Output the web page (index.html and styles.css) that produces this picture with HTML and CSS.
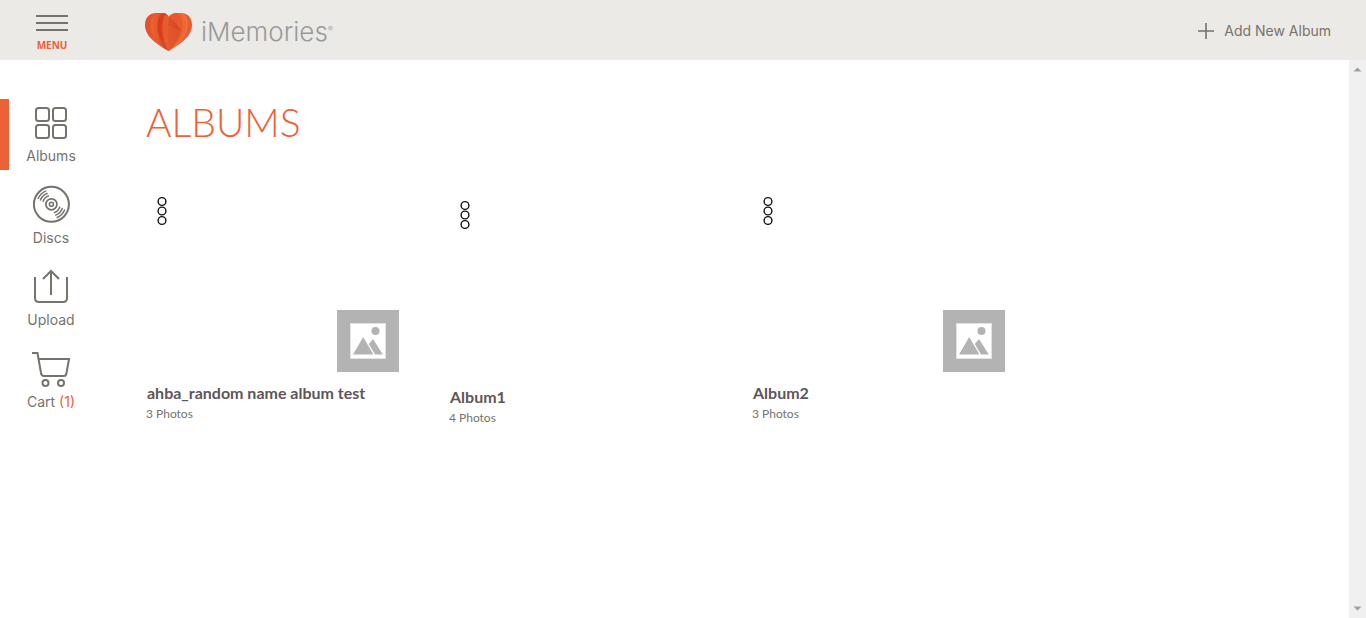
FILE: index.html
```html
<!DOCTYPE html>
<html lang="en">
<head>
<meta charset="utf-8">
<title>iMemories - Albums</title>
<meta name="viewport" content="width=device-width, initial-scale=1">
<link rel="stylesheet" href="styles.css">
</head>
<body>
<svg class="defs" width="0" height="0" aria-hidden="true">
  <symbol id="dots" viewBox="0 0 10 30"><g fill="none" stroke="#111" stroke-width="1.400"><circle cx="5" cy="5.500" r="3.900"/><circle cx="5" cy="15" r="3.900"/><circle cx="5" cy="24.500" r="3.900"/></g></symbol>
  <symbol id="photo" viewBox="0 0 62 62"><path fill="#b3b3b3" d="M0 0h62v62H0z"/><path fill="#fff" stroke="#e2e2e2" d="M13.500 13.500h35v35h-35z"/><circle cx="38.500" cy="21" r="4" fill="#b3b3b3"/><path fill="#b3b3b3" d="M16 44.500 26.200 27l10.300 17.500zM31.800 34l4.200-5 9.800 15.500h-7.800z"/></symbol>
</svg>
<header class="topbar">
  <button class="menu" type="button">
    <svg width="32" height="18" viewBox="0 0 32 18" aria-hidden="true"><path d="M0 2h32M0 9h32M0 16h32" stroke="#75736c" stroke-width="2"/></svg>
    <span>MENU</span>
  </button>
  <a class="brand" href="#">
    <svg width="48" height="40" viewBox="0 0 48 40" aria-hidden="true">
      <defs>
        <linearGradient id="outer"><stop offset="0" stop-color="#e04f28"/><stop offset=".5" stop-color="#f0693a"/><stop offset="1" stop-color="#e65a30"/></linearGradient>
        <linearGradient id="fold"><stop offset="0" stop-color="#ee6534"/><stop offset="1" stop-color="#d63f20"/></linearGradient>
        <linearGradient id="inner"><stop offset="0" stop-color="#d23a1e"/><stop offset="1" stop-color="#e04a25"/></linearGradient>
        <linearGradient id="shade"><stop offset="0" stop-color="#dd5029"/><stop offset="1" stop-color="#d04822"/></linearGradient>
      </defs>
      <path fill="url(#outer)" d="M23.500 39C13 33 0 25 0 13 0 5 5 1 11 1c5 0 9 0 12.500 4C27 1 31 1 36 1c6 0 11 4 11 12 0 12-13 20-23.500 26z"/>
      <path fill="url(#fold)" d="M23.500 39C11 31 5 22 6 12 6.500 6 9 2 13 1h5c3 0 5 2 5.500 4z"/>
      <path fill="url(#inner)" d="M23.500 39C16 31 11 21 13 10c.7-4 2.500-8 5-9 2.500 0 4 2 5.500 4z"/>
      <path fill="#e95a2d" d="M23.500 39C18 29 16 17 18.500 7c.7-3 1.500-4 2.500-4 1 0 2 1 2.500 2z"/>
      <path fill="#ef6636" d="M23.500 39V5c3-3 5-4 9-4h4c5 2 7 7 6 13-1.500 11-10 19-19 25z"/>
      <path fill="#e85a2e" d="M23.500 39V5c2-2.500 5-4 8-4 4 2 6.500 7 6 13-.7 10-7 18-14 25z"/>
      <path fill="url(#shade)" d="M23.500 39V5c6 3 10 9 12.500 14-2.500 8-7 15-12.500 20z"/>
      <path fill="#e75c31" d="M23.500 39V13L36 19c-2.500 8-7 15-12.500 20z" opacity=".5"/>
      <path fill="none" stroke="#f58150" stroke-width=".6" d="M36.500 1c10 8 7 25-13 38"/>
    </svg>
    <span class="wordmark">iMemories<sup>®</sup></span>
  </a>
  <button class="add" type="button">
    <svg width="16" height="16" viewBox="0 0 16 16" aria-hidden="true"><path d="M0 8h16M8 0v16" stroke="#75736c" stroke-width="1.600"/></svg>
    <span>Add New Album</span>
  </button>
</header>
<div class="shell">
  <nav class="side">
    <a class="item active" href="#">
      <svg width="40" height="40" viewBox="0 0 40 40" aria-hidden="true"><rect x="5" y="5" width="13" height="13" rx="2.500"/><rect x="22" y="5" width="13" height="13" rx="2.500"/><rect x="5" y="22" width="13" height="13" rx="2.500"/><rect x="22" y="22" width="13" height="13" rx="2.500"/></svg>
      <span>Albums</span>
    </a>
    <a class="item" href="#">
      <svg width="40" height="40" viewBox="0 0 40 40" aria-hidden="true"><g transform="translate(20.400 19.300)"><circle r="17.500"/><circle r="5.500" stroke-width="1.700"/><circle r="2" stroke-width="1.600"/><path id="grooves" stroke-width="1.500" d="M-8.500-2.500A9 9 0 0 1-2.500-8.500M-11.100-3.800A11.700 11.700 0 0 1-3.800-11.100M-13.400-5.200A14.400 14.400 0 0 1-5.200-13.400"/><use href="#grooves" transform="rotate(180)"/></g></svg>
      <span>Discs</span>
    </a>
    <a class="item" href="#">
      <svg width="40" height="40" viewBox="0 0 40 40" aria-hidden="true"><path d="M4 10v21q0 4 4 4h24q4 0 4-4V10M20 28V4M12 12l8-8 8 8"/></svg>
      <span>Upload</span>
    </a>
    <a class="item" href="#">
      <svg width="40" height="40" viewBox="0 0 40 40" aria-hidden="true"><path d="M1 4h5.500L10 24q.5 3 3 3h20q2 0 2.500-3L38 10H7.500"/><circle cx="14.500" cy="34" r="3"/><circle cx="30" cy="34" r="3"/></svg>
      <span>Cart <em>(1)</em></span>
    </a>
  </nav>
  <main class="content">
    <h1>ALBUMS</h1>
    <div class="grid">
      <article class="card">
        <div class="media"><button type="button" aria-label="Album options"><svg width="10" height="30"><use href="#dots"/></svg></button><svg class="thumb" width="62" height="62"><use href="#photo"/></svg></div>
        <h2>ahba_random name album test</h2>
        <p>3 Photos</p>
      </article>
      <article class="card lowered">
        <div class="media"><button type="button" aria-label="Album options"><svg width="10" height="30"><use href="#dots"/></svg></button></div>
        <h2>Album1</h2>
        <p>4 Photos</p>
      </article>
      <article class="card">
        <div class="media"><button type="button" aria-label="Album options"><svg width="10" height="30"><use href="#dots"/></svg></button><svg class="thumb" width="62" height="62"><use href="#photo"/></svg></div>
        <h2>Album2</h2>
        <p>3 Photos</p>
      </article>
    </div>
  </main>
  <div class="scroll" aria-hidden="true">
    <svg width="9" height="5" viewBox="0 0 9 5"><path d="M.5 4.500 4.500.5l4 4z" fill="#a0a0a0"/></svg>
    <svg width="9" height="5" viewBox="0 0 9 5"><path d="M.5.5h8l-4 4z" fill="#a0a0a0"/></svg>
  </div>
</div>
</body>
</html>
```
FILE: styles.css
```css
* { box-sizing: border-box; }
body {
  margin: 0;
  min-height: 100vh;
  display: flex;
  flex-direction: column;
  background: #fff;
  color: #75736c;
  font-family: Lato, "Liberation Sans", sans-serif;
}
svg { display: block; flex: none; }
.defs { position: absolute; }
button { border: 0; padding: 0; background: none; color: inherit; font: inherit; cursor: pointer; }
a { color: inherit; text-decoration: none; }

.topbar {
  display: flex;
  align-items: center;
  height: 60px;
  padding-right: 35px;
  background: #ebeae6;
}
.menu {
  width: 104px;
  display: flex;
  flex-direction: column;
  align-items: center;
  gap: 7px;
  padding-top: 4px;
  color: #ec6136;
  font: 700 10px/12px "Open Sans", sans-serif;
}
.brand { display: flex; align-items: center; gap: 8px; margin-left: 41px; padding-top: 3px; }
.wordmark { color: #999a9c; font: 300 26px/32px Inter, sans-serif; }
.wordmark sup { font-size: 8px; line-height: 8px; vertical-align: 9px; }
.add { display: flex; align-items: center; gap: 10px; margin-left: auto; padding-top: 2px; font: 14px/20px Inter, sans-serif; }

.shell { flex: 1; display: flex; }
.side { width: 102px; padding-top: 39px; display: flex; flex-direction: column; gap: 11px; }
.item {
  height: 71px;
  padding: 4px 9px 0 0;
  border-left: 9px solid transparent;
  display: flex;
  flex-direction: column;
  align-items: center;
  gap: 4px;
  font: 14px/18px Inter, sans-serif;
}
.item.active { border-left-color: #ec6136; }
.item svg { fill: none; stroke: #75736c; stroke-width: 2; }
.item em { color: #ec6136; font-style: normal; }

.content { flex: 1; padding: 37px 40px 40px 44px; }
h1 { margin: 0; color: #ec6136; font: 300 39px/50px Lato, sans-serif; }
.grid { display: grid; grid-template-columns: repeat(auto-fill, 253px); gap: 50px; padding-top: 43px; }
.media { height: 182px; display: flex; justify-content: space-between; padding-left: 11px; }
.media button { align-self: flex-start; padding-top: 6px; }
.thumb { align-self: flex-end; }
.lowered { padding-top: 4px; }
h2 { margin: 11px 0 0; padding-left: 1px; color: #5e5658; font-size: 16px; line-height: 20px; font-weight: 700; white-space: nowrap; }
.card p { margin: 2px 0 0; font-size: 12px; line-height: 18px; }

.scroll { width: 17px; padding: 7px 4px; display: flex; flex-direction: column; justify-content: space-between; background: #f0f0f0; }
```
